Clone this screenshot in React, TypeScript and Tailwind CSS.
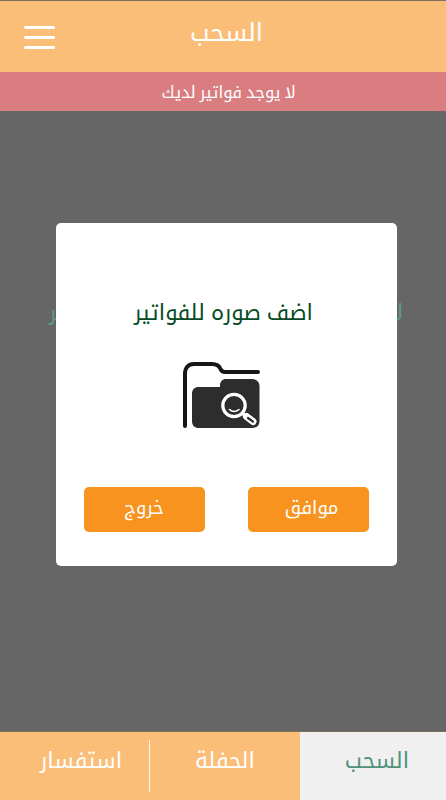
import React from 'react';

interface LabelProps {
  children: React.ReactNode;
  className?: string;
}

const Label: React.FC<LabelProps> = ({ children, className = '' }) => (
  <span dir="rtl" className={`block whitespace-nowrap ${className}`}>
    {children}
  </span>
);

const FolderSearchIcon: React.FC = () => (
  <svg width="78" height="67" viewBox="0 0 78 67" fill="none" className="shrink-0">
    <path
      d="M2 64V12C2 6 5 2 11 2H29C34 2 36.500 4.500 37.500 7C38.500 9.500 39.500 10 42 10H75"
      stroke="#171717"
      strokeWidth="4"
      strokeLinecap="round"
      strokeLinejoin="round"
    />
    <path
      d="M16 25H37V23.500C37 19.500 39.500 17 43 17H69C74 17 76.500 20 76.500 24V59C76.500 63.500 74 66 69 66H16C11.500 66 9 63.500 9 59V32C9 27.500 11.500 25 16 25Z"
      fill="#2d2d2d"
    />
    <circle cx="51" cy="43.500" r="11.200" stroke="#fff" strokeWidth="3.200" />
    <path d="M46.500 47.500Q51 51.500 56 47.500" stroke="#fff" strokeWidth="1.600" strokeLinecap="round" />
    <path d="M59 51L64 55" stroke="#fff" strokeWidth="3.500" />
    <path d="M63.500 54.500L70 59.500" stroke="#fff" strokeWidth="7" strokeLinecap="round" />
    <path d="M65 56L70 59.700" stroke="#2d2d2d" strokeWidth="2.200" strokeLinecap="round" />
  </svg>
);

const App: React.FC = () => (
  <div className="relative flex h-[800px] w-[446px] flex-col overflow-hidden border-t border-[#80715f] bg-[#666666] font-['Noto_Kufi_Arabic','Noto_Sans_Arabic','DejaVu_Sans',sans-serif]">
    <header className="flex h-[71px] shrink-0 items-center bg-[#fabe79] pl-6">
      <button aria-label="القائمة" className="mt-[2px] flex w-[31px] flex-col gap-[7px]">
        <span className="h-[3px] rounded-full bg-white" />
        <span className="h-[3px] rounded-full bg-white" />
        <span className="h-[3px] rounded-full bg-white" />
      </button>
      <h1 className="ml-[135px] pb-[9px] text-[25px] leading-none text-white">
        <Label>السحب</Label>
      </h1>
    </header>

    <div className="flex h-[39px] shrink-0 items-center justify-center bg-[#d97d80] pt-[4px] pl-[11px] text-[16.5px] leading-none text-white">
      <Label className="[word-spacing:-1.5px]">لا يوجد فواتير لديك</Label>
    </div>

    {/* empty state, mostly hidden behind the dialog */}
    <main className="flex flex-1 items-start justify-between px-[43px] pl-[49px] pt-[191px] text-[22px] leading-none text-[#589b83]">
      <Label>فواتير</Label>
      <Label>لا يوجد</Label>
    </main>

    <nav className="flex h-[69px] shrink-0 border-t border-[#7c6f60] text-[22px] leading-none text-white">
      <div className="flex w-[149px] justify-end bg-[#fabe79] pt-[18px] pr-[27px]">
        <Label className="tracking-[-0.1px]">استفسار</Label>
      </div>
      <div className="flex w-[151px] items-start bg-[#fabe79] pt-2">
        <span className="h-[52px] w-px bg-white/90" />
        <Label className="ml-[45px] pt-[10px]">الحفلة</Label>
      </div>
      <div className="flex flex-1 justify-end bg-[#f0f0f0] pt-[18px] pr-[37px] text-[#4f927c]">
        <Label>السحب</Label>
      </div>
    </nav>

    <div
      role="dialog"
      className="absolute top-[222px] left-[56px] flex h-[343px] w-[341px] flex-col items-center rounded-[5px] bg-white pt-[79px]"
    >
      <p className="mr-[6px] h-[60px] text-[22px] leading-none text-[#064b25]">
        <Label className="[word-spacing:-1.5px]">اضف صوره للفواتير</Label>
      </p>
      <div className="mr-[9px] flex h-[125px]">
        <FolderSearchIcon />
      </div>
      <div className="mr-px flex gap-[43px] text-[18.5px] leading-none text-white">
        <button className="flex h-[45px] w-[121px] items-start justify-center rounded-[5px] bg-[#f7931e] pt-[12px]">
          <Label>خروج</Label>
        </button>
        <button className="flex h-[45px] w-[121px] items-start justify-center rounded-[5px] bg-[#f7931e] pt-[12px] pl-[7px]">
          <Label>موافق</Label>
        </button>
      </div>
    </div>
  </div>
);

export default App;
